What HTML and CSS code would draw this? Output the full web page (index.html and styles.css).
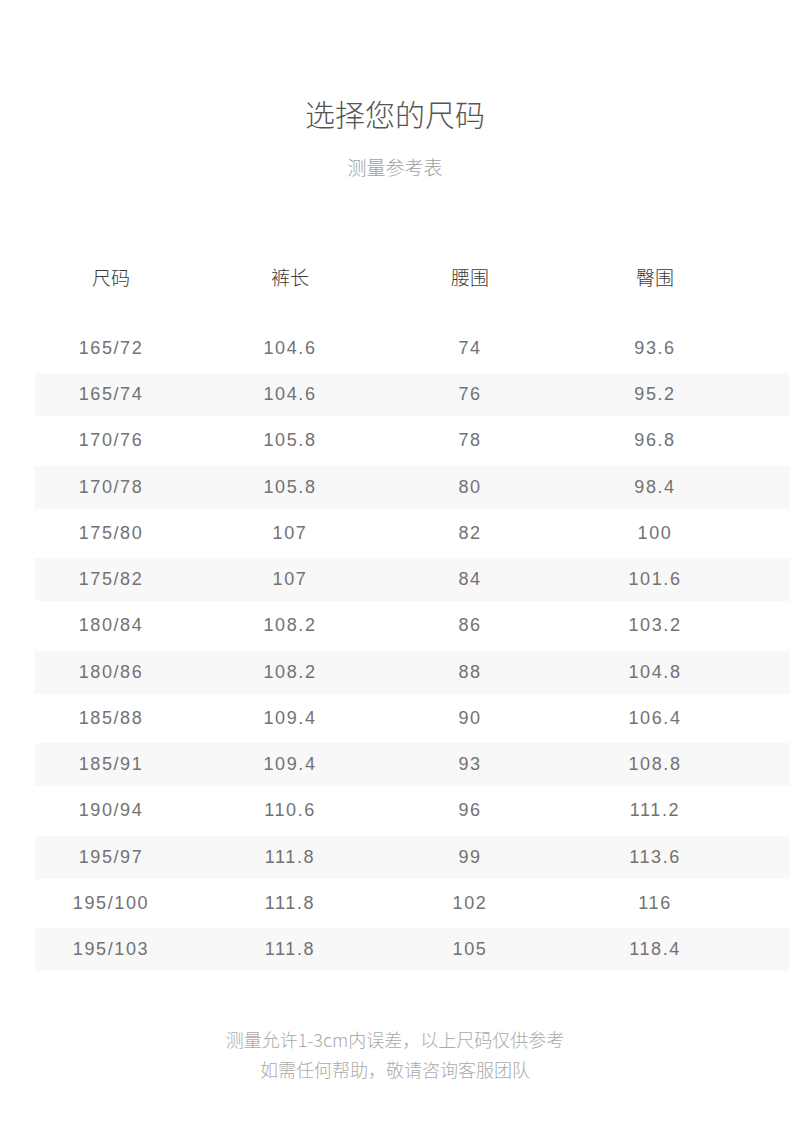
FILE: index.html
```html
<!DOCTYPE html>
<html lang="zh-CN">
<head>
<meta charset="utf-8">
<title>选择您的尺码</title>
<link rel="stylesheet" href="styles.css">
</head>
<body>
<div class="page">
  <header class="intro">
    <h1 class="title">选择您的尺码</h1>
    <p class="subtitle">测量参考表</p>
  </header>
  <section class="table">
    <div class="row head"><span>尺码</span><span>裤长</span><span>腰围</span><span>臀围</span></div>
    <div class="rows">
      <div class="row"><span>165/72</span><span>104.6</span><span>74</span><span>93.6</span></div>
      <div class="row alt"><span>165/74</span><span>104.6</span><span>76</span><span>95.2</span></div>
      <div class="row"><span>170/76</span><span>105.8</span><span>78</span><span>96.8</span></div>
      <div class="row alt"><span>170/78</span><span>105.8</span><span>80</span><span>98.4</span></div>
      <div class="row"><span>175/80</span><span>107</span><span>82</span><span>100</span></div>
      <div class="row alt"><span>175/82</span><span>107</span><span>84</span><span>101.6</span></div>
      <div class="row"><span>180/84</span><span>108.2</span><span>86</span><span>103.2</span></div>
      <div class="row alt"><span>180/86</span><span>108.2</span><span>88</span><span>104.8</span></div>
      <div class="row"><span>185/88</span><span>109.4</span><span>90</span><span>106.4</span></div>
      <div class="row alt"><span>185/91</span><span>109.4</span><span>93</span><span>108.8</span></div>
      <div class="row"><span>190/94</span><span>110.6</span><span>96</span><span>111.2</span></div>
      <div class="row alt"><span>195/97</span><span>111.8</span><span>99</span><span>113.6</span></div>
      <div class="row"><span>195/100</span><span>111.8</span><span>102</span><span>116</span></div>
      <div class="row alt"><span>195/103</span><span>111.8</span><span>105</span><span>118.4</span></div>
    </div>
  </section>
  <footer class="note">
    <p>测量允许1-3cm内误差，以上尺码仅供参考</p>
    <p>如需任何帮助，敬请咨询客服团队</p>
  </footer>
</div>
</body>
</html>
```

FILE: styles.css
```css
* { box-sizing: border-box; }
html, body { margin: 0; padding: 0; background: #fff; }
body {
  font-family: "Noto Sans CJK SC", "Noto Sans", sans-serif;
  font-weight: 300;
  color: #333;
}
.page { width: 790px; }
.intro { text-align: center; padding-top: 93px; }
.title {
  margin: 0;
  font-size: 30px;
  line-height: 40px;
  font-weight: 300;
  color: #555;
}
.subtitle {
  margin: 20px 0 0;
  font-size: 19px;
  line-height: 28px;
  color: #a0a0a0;
}
.table { margin: 72px 0 0 35px; }
.row {
  display: grid;
  grid-template-columns: 152px 206px 154px 216px 1fr;
  align-items: center;
  height: 42.75px;
  font-family: "Liberation Sans", "Noto Sans CJK SC", sans-serif;
  font-size: 18px;
  letter-spacing: 1.6px;
  color: #727272;
}
.row span { text-align: center; }
.row.head {
  height: 46px;
  font-family: "Noto Sans CJK SC", sans-serif;
  font-size: 19px;
  letter-spacing: 0;
  color: #3a3a3a;
}
.rows {
  margin-top: 28px;
  display: flex;
  flex-direction: column;
  gap: 3.5px;
}
.row.alt { background: #f8f8f8; }
.note {
  margin-top: 53px;
  text-align: center;
  font-size: 18px;
  line-height: 30px;
  color: #aaa;
}
.note p { margin: 0; }
```
